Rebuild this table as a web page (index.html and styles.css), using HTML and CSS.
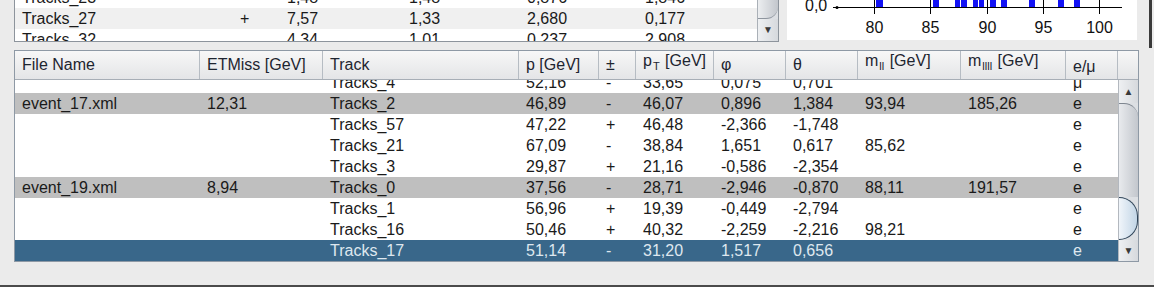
FILE: index.html
```html
<!DOCTYPE html>
<html>
<head>
<meta charset="utf-8">
<link rel="stylesheet" href="styles.css">
</head>
<body>
<div class="top">
  <div class="toptable">
    <div class="toprows">
      <div class="toprows-inner">
        <div class="trow"><span>Tracks_23</span><span></span><span>1,48</span><span>1,48</span><span>0,876</span><span>1,846</span></div>
        <div class="trow alt"><span>Tracks_27</span><span>+</span><span>7,57</span><span>1,33</span><span>2,680</span><span>0,177</span></div>
        <div class="trow"><span>Tracks_32</span><span></span><span>4,34</span><span>1,01</span><span>0,237</span><span>2,908</span></div>
      </div>
    </div>
    <div class="vscroll vscroll-top">
      <div class="track track-top"></div>
      <div class="btn"><span class="arrow">▼</span></div>
    </div>
  </div>
  <div class="chart">
    <svg width="350" height="40" viewBox="0 0 350 40">
      <g fill="#1212f5">
        <rect x="89" y="0" width="7" height="7"/>
        <rect x="146" y="0" width="6" height="7"/>
        <rect x="168" y="0" width="5" height="7"/>
        <rect x="174" y="0" width="6" height="7"/>
        <rect x="186" y="0" width="5" height="7"/>
        <rect x="192" y="0" width="5" height="7"/>
        <rect x="203" y="0" width="6" height="7"/>
        <rect x="214" y="0" width="6" height="7"/>
        <rect x="242" y="0" width="6" height="7"/>
        <rect x="271" y="0" width="6" height="7"/>
        <rect x="287" y="0" width="6" height="7"/>
      </g>
      <g stroke="#000" stroke-width="1">
        <line x1="46" y1="7.5" x2="335" y2="7.5"/>
        <line x1="87.5" y1="0" x2="87.5" y2="14"/>
        <line x1="143.5" y1="0" x2="143.5" y2="14"/>
        <line x1="200.5" y1="0" x2="200.5" y2="14"/>
        <line x1="256.5" y1="0" x2="256.5" y2="14"/>
        <line x1="312.5" y1="0" x2="312.5" y2="14"/>
      </g>
      <circle cx="50" cy="7.5" r="1.5" fill="#000"/>
      <g class="axis-label">
        <text x="18" y="11">0,0</text>
        <text x="87.5" y="33" text-anchor="middle">80</text>
        <text x="143.5" y="33" text-anchor="middle">85</text>
        <text x="200.5" y="33" text-anchor="middle">90</text>
        <text x="256.5" y="33" text-anchor="middle">95</text>
        <text x="312.5" y="33" text-anchor="middle">100</text>
      </g>
    </svg>
  </div>
  <div class="edge"></div>
</div>

<div class="bottom">
  <div class="thead">
    <div class="th">File Name</div>
    <div class="th">ETMiss [GeV]</div>
    <div class="th">Track</div>
    <div class="th">p [GeV]</div>
    <div class="th">±</div>
    <div class="th"><span class="raise">p<sub>T</sub> [GeV]</span></div>
    <div class="th">φ</div>
    <div class="th">θ</div>
    <div class="th"><span class="raise">m<sub>ll</sub> [GeV]</span></div>
    <div class="th"><span class="raise">m<sub>llll</sub> [GeV]</span></div>
    <div class="th th-low">e/μ</div>
    <div class="th corner"></div>
  </div>
  <div class="tbody">
    <div class="rows">
      <div class="rows-inner">
        <div class="row"><span></span><span></span><span>Tracks_4</span><span>52,16</span><span>-</span><span>33,65</span><span>0,075</span><span>0,701</span><span></span><span></span><span>μ</span></div>
        <div class="row event"><span>event_17.xml</span><span>12,31</span><span>Tracks_2</span><span>46,89</span><span>-</span><span>46,07</span><span>0,896</span><span>1,384</span><span>93,94</span><span>185,26</span><span>e</span></div>
        <div class="row"><span></span><span></span><span>Tracks_57</span><span>47,22</span><span>+</span><span>46,48</span><span>-2,366</span><span>-1,748</span><span></span><span></span><span>e</span></div>
        <div class="row"><span></span><span></span><span>Tracks_21</span><span>67,09</span><span>-</span><span>38,84</span><span>1,651</span><span>0,617</span><span>85,62</span><span></span><span>e</span></div>
        <div class="row"><span></span><span></span><span>Tracks_3</span><span>29,87</span><span>+</span><span>21,16</span><span>-0,586</span><span>-2,354</span><span></span><span></span><span>e</span></div>
        <div class="row event"><span>event_19.xml</span><span>8,94</span><span>Tracks_0</span><span>37,56</span><span>-</span><span>28,71</span><span>-2,946</span><span>-0,870</span><span>88,11</span><span>191,57</span><span>e</span></div>
        <div class="row"><span></span><span></span><span>Tracks_1</span><span>56,96</span><span>+</span><span>19,39</span><span>-0,449</span><span>-2,794</span><span></span><span></span><span>e</span></div>
        <div class="row"><span></span><span></span><span>Tracks_16</span><span>50,46</span><span>+</span><span>40,32</span><span>-2,259</span><span>-2,216</span><span>98,21</span><span></span><span>e</span></div>
        <div class="row selected"><span></span><span></span><span>Tracks_17</span><span>51,14</span><span>-</span><span>31,20</span><span>1,517</span><span>0,656</span><span></span><span></span><span>e</span></div>
      </div>
    </div>
    <div class="vscroll vscroll-bottom">
      <div class="btn btn-up"><span class="arrow">▲</span></div>
      <div class="track track-bottom"></div>
      <div class="thumb"></div>
      <div class="btn btn-down"><span class="arrow">▼</span></div>
    </div>
  </div>
</div>
<div class="footer-line"></div>
</body>
</html>
```

FILE: styles.css
```css
* { box-sizing: border-box; }
html, body { margin: 0; padding: 0; }
body {
  width: 1154px;
  height: 287px;
  overflow: hidden;
  background: #ebebeb;
  font-family: "Liberation Sans", Arial, sans-serif;
  font-size: 16px;
  color: #1a1a1a;
  display: flex;
  flex-direction: column;
}

/* ---------- top strip ---------- */
.top {
  display: flex;
  height: 50px;
  padding-left: 14px;
  flex-shrink: 0;
}
.toptable {
  width: 765px;
  height: 42px;
  border: 1px solid #8d949c;
  border-top: none;
  display: flex;
  background: #fff;
}
.toprows {
  flex: 1;
  overflow: hidden;
}
.toprows-inner { margin-top: -13px; }
.trow {
  display: grid;
  grid-template-columns: 218px 47px 122px 118px 118px 1fr;
  height: 21px;
  line-height: 21px;
  padding-left: 7px;
  background: #fff;
  white-space: nowrap;
}
.trow.alt { background: #f0f0f0; }

.vscroll {
  width: 21px;
  display: flex;
  flex-direction: column;
  border-left: 1px solid #aab0b7;
  background: #dcdfe3;
}
.vscroll-top { height: 41px; }
.track-top {
  height: 19px;
  background: linear-gradient(to right, #eceef0, #c2c6cc);
  border-bottom: 1px solid #8e959e;
  border-bottom-right-radius: 12px;
}
.btn {
  display: flex;
  align-items: center;
  justify-content: center;
  background: linear-gradient(to right, #eef0f2, #d6d9dd);
}
.vscroll-top .btn { flex: 1; }
.arrow {
  font-size: 10px;
  color: #3a3a3a;
  line-height: 1;
}

.chart {
  margin-left: 8px;
  width: 350px;
  height: 40px;
  background: #fff;
}
.chart svg { display: block; }
.axis-label text {
  font-family: "Liberation Sans", Arial, sans-serif;
  font-size: 16px;
  fill: #111;
}
.edge {
  margin-left: 12px;
  width: 3px;
  height: 48px;
  background: #3a3a3a;
}

/* ---------- bottom table ---------- */
.bottom {
  margin-left: 14px;
  width: 1125px;
  border: 1px solid #8e99a5;
  display: flex;
  flex-direction: column;
  flex-shrink: 0;
}
.thead {
  display: grid;
  grid-template-columns: 185px 123px 196px 80px 37px 78px 72px 72px 103px 105px 52px 20px;
  height: 29px;
  background: linear-gradient(#f7f7f7, #e4e5e7);
  border-bottom: 1px solid #a7aeb6;
}
.th {
  border-right: 1px solid #b6bcc3;
  padding-left: 7px;
  display: flex;
  align-items: center;
  color: #1e2530;
  white-space: nowrap;
}
.th.corner { border-right: none; }
.th-low { padding-top: 4px; }
.raise { position: relative; top: -3px; }
.th sub {
  font-size: 11px;
  vertical-align: -4px;
  margin-left: 1px;
  margin-right: 1px;
}

.tbody {
  display: flex;
  height: 181px;
}
.rows {
  flex: 1;
  overflow: hidden;
  background: #fff;
}
.rows-inner { margin-top: -8px; }
.row {
  display: grid;
  grid-template-columns: 185px 123px 196px 80px 37px 78px 72px 72px 103px 105px 52px;
  height: 21px;
  line-height: 21px;
  background: #fff;
}
.row > span {
  padding-left: 7px;
  white-space: nowrap;
}
.row.event { background: #bfbfbf; }
.row.selected {
  background: #39678a;
  color: #dfe7ef;
}

.vscroll-bottom {
  width: 20px;
  height: 181px;
  border-left: 1px solid #b3b8bf;
}
.btn-up { height: 23px; }
.btn-down { height: 21px; }
.track-bottom {
  flex: 1;
  background: linear-gradient(to right, #e8eaed, #c3c7cd);
  border-top: 1px solid #7e8690;
  border-top-right-radius: 14px;
}
.thumb {
  height: 43px;
  background: linear-gradient(to right, #f0f5fa, #c2d5e6);
  border: 1px solid #2f4458;
  border-left: none;
  border-radius: 0 21px 21px 0;
}

.footer-line {
  margin-top: auto;
  height: 2px;
  background: #4a4a4a;
}
```
